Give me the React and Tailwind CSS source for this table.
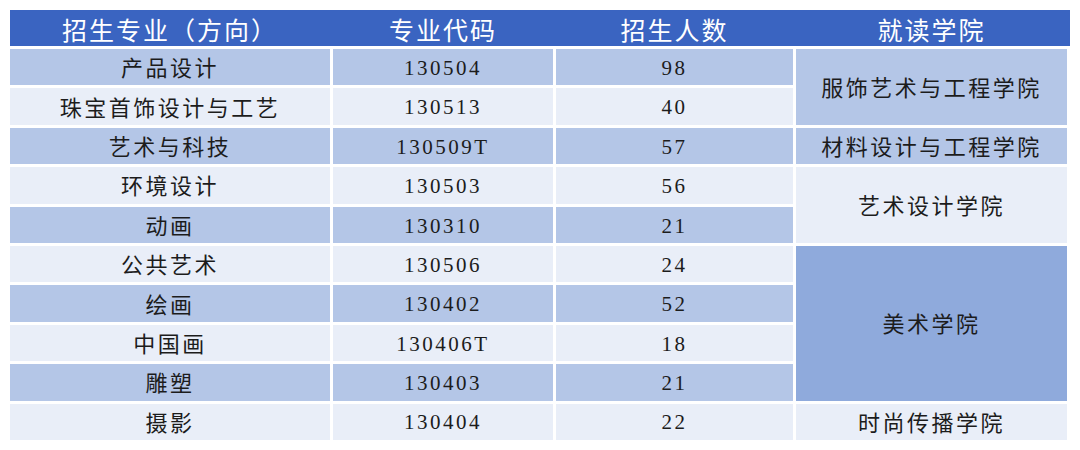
import React from "react";

const rows = [
  { name: "产品设计", code: "130504", count: "98" },
  { name: "珠宝首饰设计与工艺", code: "130513", count: "40" },
  { name: "艺术与科技", code: "130509T", count: "57" },
  { name: "环境设计", code: "130503", count: "56" },
  { name: "动画", code: "130310", count: "21" },
  { name: "公共艺术", code: "130506", count: "24" },
  { name: "绘画", code: "130402", count: "52" },
  { name: "中国画", code: "130406T", count: "18" },
  { name: "雕塑", code: "130403", count: "21" },
  { name: "摄影", code: "130404", count: "22" },
];

// college cells keyed by the row where they start
const colleges = {
  0: { label: "服饰艺术与工程学院", span: "row-span-2", bg: "bg-[#b4c6e7]" },
  2: { label: "材料设计与工程学院", span: "", bg: "bg-[#b4c6e7]" },
  3: { label: "艺术设计学院", span: "row-span-2", bg: "bg-[#e9eef8]" },
  5: { label: "美术学院", span: "row-span-4", bg: "bg-[#8faadc]" },
  9: { label: "时尚传播学院", span: "", bg: "bg-[#e9eef8]" },
};

const cols = "grid grid-cols-[320px_220px_237px_271px] gap-x-[3px]";
const cell = "flex items-center justify-center pt-[3px]";

const App = () => {
  return (
    <div className="min-h-screen w-full bg-white pt-[10px] pl-[10px] font-['Liberation_Serif','Noto_Sans_CJK_SC',serif] text-[#1c1c1c]">
      {/* Header */}
      <div className={`${cols} w-[1060px] h-[36px] bg-[#3a64c1] text-white text-[25px] tracking-[2px]`}>
        <div className={cell}>招生专业（方向）</div>
        <div className={cell}>专业代码</div>
        <div className={cell}>招生人数</div>
        <div className={cell}>就读学院</div>
      </div>

      {/* Body */}
      <div className={`${cols} grid-rows-[repeat(10,36.4px)] gap-y-[3px] mt-[3px] tracking-[2.5px]`}>
        {rows.map((r, i) => {
          const bg = i % 2 === 0 ? "bg-[#b4c6e7]" : "bg-[#e9eef8]";
          const c = colleges[i];
          return (
            <React.Fragment key={r.code}>
              <div className={`${bg} ${cell} text-[22px]`}>{r.name}</div>
              <div className={`${bg} ${cell} text-[21px]`}>{r.code}</div>
              <div className={`${bg} ${cell} text-[21px]`}>{r.count}</div>
              {c && (
                <div className={`${c.bg} ${c.span} ${cell} text-[22px]`}>
                  {c.label}
                </div>
              )}
            </React.Fragment>
          );
        })}
      </div>
    </div>
  );
};

export default App;
